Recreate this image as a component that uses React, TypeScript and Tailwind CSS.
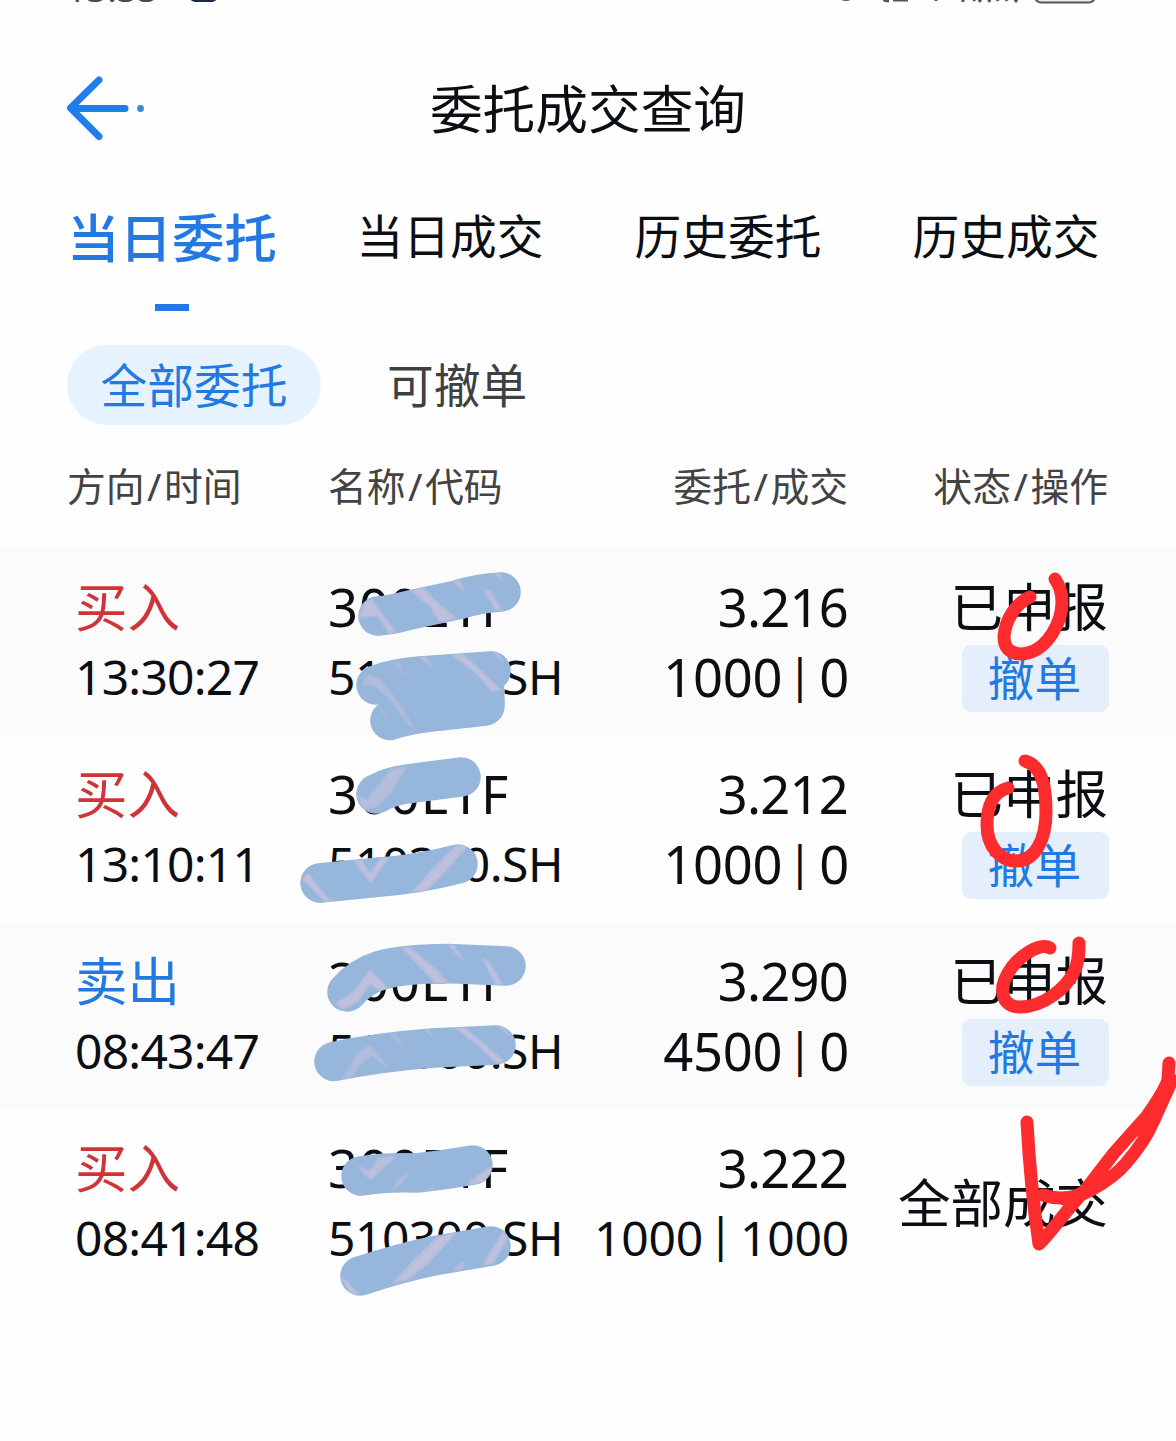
type Order = {
  side: string;
  time: string;
  name: string;
  code: string;
  price: string;
  amount: string;
  filled: string;
  status: string;
  cancelable: boolean;
};

const tabs = ["当日委托", "当日成交", "历史委托", "历史成交"];

const orders: Order[] = [
  {
    side: "买入",
    time: "13:30:27",
    name: "300ETF",
    code: "510300.SH",
    price: "3.216",
    amount: "1000",
    filled: "0",
    status: "已申报",
    cancelable: true,
  },
  {
    side: "买入",
    time: "13:10:11",
    name: "300ETF",
    code: "510300.SH",
    price: "3.212",
    amount: "1000",
    filled: "0",
    status: "已申报",
    cancelable: true,
  },
  {
    side: "卖出",
    time: "08:43:47",
    name: "300ETF",
    code: "510300.SH",
    price: "3.290",
    amount: "4500",
    filled: "0",
    status: "已申报",
    cancelable: true,
  },
  {
    side: "买入",
    time: "08:41:48",
    name: "300ETF",
    code: "510300.SH",
    price: "3.222",
    amount: "1000",
    filled: "1000",
    status: "全部成交",
    cancelable: false,
  },
];

// marker strokes over the name and code column
const markerPaths = [
  "M378 616 Q392 615 410 610 L457 600 Q480 593 501 592",
  "M376 685 Q395 678 420 676 L491 671",
  "M390 720.5 Q402 716 430 712 L485 706",
  "M408 698 L482 690",
  "M484 680 L485 702",
  "M376 794 Q390 786 407 784 L461 777",
  "M320 883 L380 877 Q420 874 458 864",
  "M347 992 C365 972 385 964 447 963.5 L506 966",
  "M334 1061.5 Q380 1052 433 1048 L496 1045",
  "M361 1176 Q385 1172 417 1173 Q445 1170 473 1165",
  "M360 1276 Q400 1263 433 1256 L491 1246",
];

const redPaths = [
  "M1030 597 C1016 603 1005 620 1004 637 C1004 652 1016 656 1028 653 C1048 648 1062 622 1062 602 C1062 590 1058 584 1055 579",
  "M1008 788 C992 792 987 808 987 825 C987 846 1000 861 1016 861 C1036 861 1046 838 1046 812 C1046 786 1042 766 1025 761",
  "M1050 948 C1040 942 1018 956 1008 973 C998 990 1002 1007 1020 1007 C1044 1007 1066 988 1074 972 C1079 962 1079 952 1079 943",
  "M1027 1122 C1029 1160 1034 1210 1039 1244 C1050 1234 1066 1210 1087 1188 L1114 1153 L1147 1116 Q1164 1092 1168 1080 L1169 1063",
  "M1043 1195 Q1067 1203 1091 1190 Q1115 1177 1127 1162 Q1145 1141 1153 1122 L1172 1080",
  "M1070 1199 L1088 1190 L1104 1176",
  "M1142 1130 L1151 1114 L1169 1084",
];

function StatusBar() {
  return (
    <svg className="block h-2 w-full" viewBox="0 0 1176 8">
      <text x="66" y="2" fontSize="36" fill="#4a4a4a" fontFamily="Noto Sans, sans-serif">
        13:33
      </text>
      <rect x="190" y="-22" width="27" height="24" rx="5" fill="#1b2a4a" />
      <g fill="none" stroke="#555" strokeWidth="3">
        <circle cx="846" cy="-9" r="8.5" />
        <path d="M884 -3 v2 q0 2 5 2 M893 0 h15 M936 -3 v4 M963 -4 v6 M972 -4 l3 5 M979 2 l4 -6 M988 -2 l2 4 M997 -2 l1 3 M1006 -2 l1 3 M1014 -2 l3 4" />
        <rect x="1034.500" y="-24" width="61" height="26.500" rx="7" strokeWidth="2" fill="#ececec" />
      </g>
    </svg>
  );
}

function Header() {
  return (
    <header className="grid h-[202px] grid-cols-[1fr_auto_1fr] items-center">
      <svg
        className="mb-[2px] ml-[64px] h-[72px] w-[84px]"
        viewBox="64 72 84 72"
        fill="none"
        stroke="#1f7eec"
        strokeWidth="7"
        strokeLinecap="round"
        strokeLinejoin="round"
      >
        <path d="M99 80 L70.500 108 L99 136.500" />
        <path d="M72 108.500 H125" />
        <circle cx="140.500" cy="108.500" r="3.400" fill="#3f86d8" stroke="none" />
      </svg>
      <h1 className="text-[52.7px] leading-none">委托成交查询</h1>
    </header>
  );
}

function Tabs() {
  return (
    <nav className="flex h-[101px] pr-[31px] pl-[33px]">
      {tabs.map((tab, i) => (
        <div key={tab} className="flex flex-1 flex-col items-center">
          {i === 0 ? (
            <>
              <span className="text-[52.5px] leading-[56px] font-medium text-[#2379e2]">{tab}</span>
              <span className="mt-[38px] h-[7px] w-[34px] bg-[#1f7ae6]" />
            </>
          ) : (
            <span className="text-[46.7px] leading-[53px]">{tab}</span>
          )}
        </div>
      ))}
    </nav>
  );
}

function HeadCell({ left, right }: { left: string; right: string }) {
  return (
    <span>
      {left}
      <span className="mx-[2.5px]">/</span>
      {right}
    </span>
  );
}

function OrderRow({ order }: { order: Order }) {
  return (
    <div className="grid h-[187px] grid-cols-[253px_240px_281px_1fr] items-center pr-[68px] pl-[75px] text-[52.5px] leading-[70px] whitespace-nowrap odd:bg-[#fbfbfb]">
      <div className="flex flex-col">
        <span className={order.side === "买入" ? "text-[#d13438]" : "text-[#2379e2]"}>{order.side}</span>
        <span className="text-[48px] tracking-[-0.8px]">{order.time}</span>
      </div>
      <div className="flex flex-col">
        <span className="tracking-[0.9px]">{order.name}</span>
        <span className="text-[48px] tracking-[-0.5px]">{order.code}</span>
      </div>
      <div className="flex flex-col items-end">
        <span className="mr-px tracking-[-0.8px]">{order.price}</span>
        {/* long quantities drop to a smaller size */}
        <span className={order.filled.length > 1 ? "text-[48px] tracking-[-0.2px]" : "tracking-[-0.3px]"}>
          {order.amount}
          <span className="inline-block w-[37px] text-center align-[5px] text-[45px] leading-none">
            <span className="relative -left-px -mx-3">|</span>
          </span>
          {order.filled}
        </span>
      </div>
      <div className="flex flex-col items-end">
        <span>{order.status}</span>
        {order.cancelable && (
          <button className="mt-[3px] -mr-px h-[67px] w-[147px] rounded-[9px] bg-[#e4effb] pr-[2px] text-[46.7px] leading-[67px] text-[#2379e2]">
            撤单
          </button>
        )}
      </div>
    </div>
  );
}

function Scribbles() {
  return (
    <svg className="pointer-events-none absolute top-0 left-0 h-[1441px] w-[1176px]" viewBox="0 0 1176 1441" fill="none">
      <defs>
        <mask id="marker" maskUnits="userSpaceOnUse" x="0" y="0" width="1176" height="1441">
          {markerPaths.map((d) => (
            <path key={d} d={d} stroke="#fff" strokeWidth="38" strokeLinecap="round" strokeLinejoin="round" />
          ))}
        </mask>
        <filter id="soft" x="-5%" y="-5%" width="110%" height="110%">
          <feGaussianBlur stdDeviation="2.500" />
        </filter>
      </defs>
      <g stroke="#96b6db" strokeWidth="39.500" strokeLinecap="round" strokeLinejoin="round">
        {markerPaths.map((d) => (
          <path key={d} d={d} />
        ))}
      </g>
      {/* light streaks inside the marker */}
      <g mask="url(#marker)" fill="#c9c3dd" fillOpacity="0.8">
        <g transform="translate(290 550) scale(.33333)" filter="url(#soft)">
          <path d="M245 145 L290 210 L320 245 L298 252 L262 198 L205 205 L220 160Z" />
          <path d="M360 120 L395 110 L440 155 L500 205 L450 217 L420 170Z" />
          <path d="M485 92 L510 92 L525 130Z M578 115 L600 122 L640 184 L615 178Z M608 66 L628 66 L640 95Z" />
          <path d="M212 405 L235 370 L270 385 L330 460 L382 548 L350 520 L300 450 L250 405Z" fillOpacity=".5" />
          <path d="M382 316 L405 316 L430 358Z M485 314 L520 312 L635 420 L605 425 L560 372Z M605 300 L640 340 L620 300Z" />
          <path d="M305 330 L325 330 L352 392Z M265 475 L275 475 L307 532Z" fillOpacity=".4" />
        </g>
        <g transform="translate(290 740) scale(.33333)" filter="url(#soft)">
          <path d="M200 165 L230 178 L300 90 L350 78 L310 150 L262 200 L220 212Z" fillOpacity=".6" />
          <path d="M188 358 L215 358 L240 400 L275 348 L302 346 L242 430Z" />
          <path d="M34 415 L55 400 L105 465 L135 488 L105 486Z" />
          <path d="M360 462 L430 385 L500 315 L535 315 L470 390 L405 458Z" />
        </g>
        <g transform="translate(290 920) scale(.33333)" filter="url(#soft)">
          <path d="M135 250 L190 215 L240 148 L298 208 L270 215 L240 192 L205 245 L160 268Z" />
          <path d="M335 82 L360 82 L440 150 L480 194 L440 194Z M470 70 L490 72 L530 137Z M572 108 L600 130 L640 197 L618 195Z" />
          <path d="M155 480 L200 400 L240 373 L305 455 L245 408 L205 440 L180 480Z" fillOpacity=".5" />
          <path d="M400 322 L412 322 L432 360Z M486 318 L520 318 L645 425 L622 432 L550 365Z M618 315 L640 318 L670 355Z" />
          <path d="M295 340 L320 340 L355 402Z" fillOpacity=".4" />
        </g>
        <g transform="translate(290 1120) scale(.33333)" filter="url(#soft)">
          <path d="M198 135 L238 152 L265 112 L318 108 L242 182Z" fillOpacity=".7" />
          <path d="M300 218 L320 180 L358 155 L340 190Z M398 218 L432 192 L425 215Z" fillOpacity=".5" />
          <path d="M528 194 L600 138 L608 165 L575 195Z" />
          <path d="M305 492 L370 420 L440 352 L505 332 L410 435 L350 480Z" />
          <path d="M575 438 L640 332 L658 345 L610 430Z M485 452 L525 422 L515 448Z M150 470 L170 482 L210 526 L180 520Z" />
        </g>
      </g>
      <g stroke="#fc2b2d" strokeWidth="13" strokeLinecap="round" strokeLinejoin="round">
        {redPaths.map((d) => (
          <path key={d} d={d} />
        ))}
      </g>
    </svg>
  );
}

export default function App() {
  return (
    <main className="relative h-[1441px] w-[1176px] overflow-hidden bg-[#fefefe] font-['Noto_Sans','Noto_Sans_CJK_SC',sans-serif] text-[#0b0e12]">
      <StatusBar />
      <Header />
      <Tabs />

      {/* filter */}
      <div className="mt-[34px] ml-[67px] flex h-20 gap-[33px] text-[46.7px] leading-[80px]">
        <span className="w-[254px] rounded-full bg-[#e6f2fd] text-center text-[#2379e2]">全部委托</span>
        <span className="px-[33px] text-[#3f4042]">可撤单</span>
      </div>

      {/* table head */}
      <div className="grid h-[123px] grid-cols-[261px_240px_280px_1fr] items-center pr-[68px] pb-px pl-[67px] text-[38.8px] text-[#434343]">
        <HeadCell left="方向" right="时间" />
        <HeadCell left="名称" right="代码" />
        <div className="text-right">
          <HeadCell left="委托" right="成交" />
        </div>
        <div className="text-right">
          <HeadCell left="状态" right="操作" />
        </div>
      </div>

      <div>
        {orders.map((order) => (
          <OrderRow key={order.time} order={order} />
        ))}
      </div>

      <Scribbles />
    </main>
  );
}
